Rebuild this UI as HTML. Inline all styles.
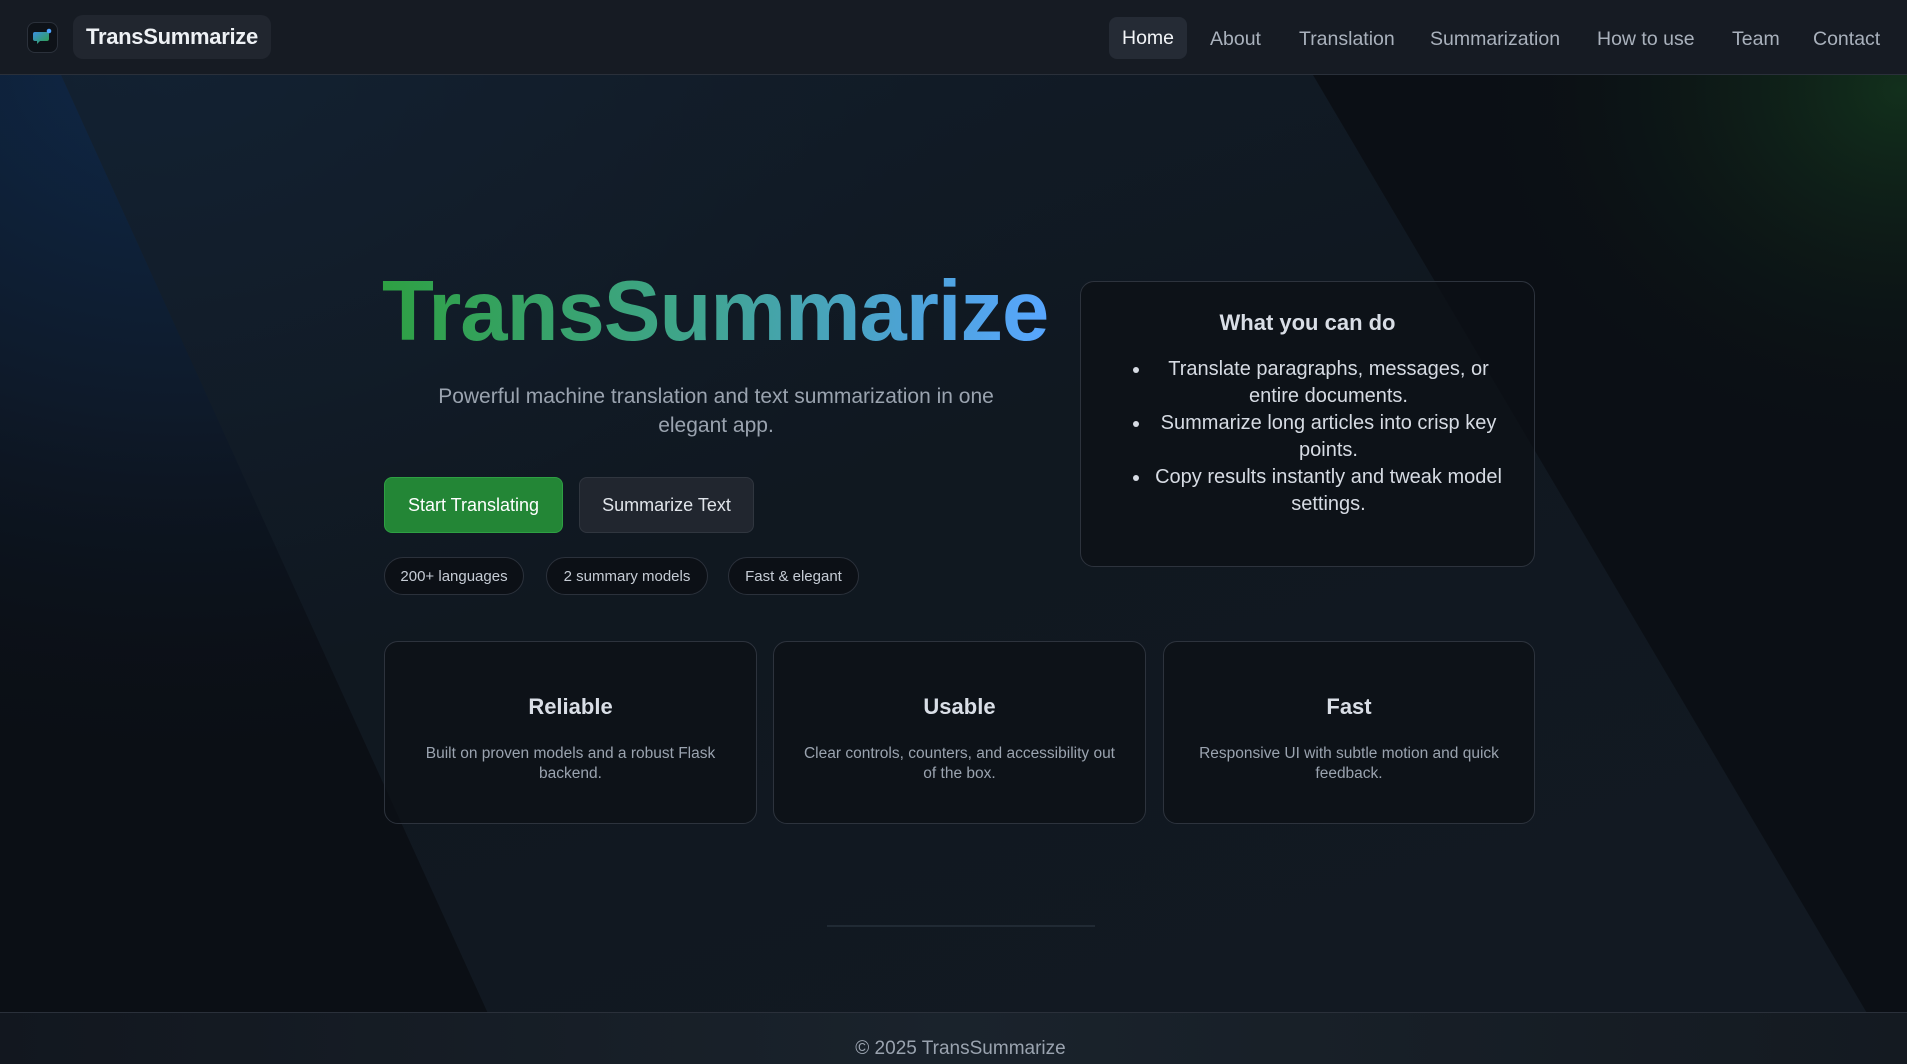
<!DOCTYPE html>
<html><head><meta charset="utf-8"><style>
*{box-sizing:border-box;margin:0;padding:0}
html,body{width:1907px;height:1064px;overflow:hidden}
body{font-family:"Liberation Sans",sans-serif;background:#0c1117;color:#d6dbe3;position:relative}
.bg{position:absolute;left:0;top:0;width:1907px;height:1064px}
header{position:absolute;left:0;top:0;width:1907px;height:75px;background:#161b23;border-bottom:1px solid #2a303a}
.logo{position:absolute;left:27px;top:22px;width:31px;height:31px;border:1px solid #2b313b;border-radius:8px;background:#0e1218}
.brand{position:absolute;left:73px;top:15px;width:198px;height:44px;border-radius:10px;background:#21262f;font-weight:bold;font-size:22px;color:#eef1f5;line-height:44px;text-align:center;letter-spacing:-0.3px}
nav a{position:absolute;top:19px;height:41px;line-height:41px;font-size:19.5px;color:#a9b1bc;text-decoration:none}
nav a.on{background:#252b35;color:#f2f4f7;border-radius:8px;padding:0 13px;top:17px;height:42px;line-height:42px}
h1{position:absolute;left:382px;top:262px;font-size:85px;font-weight:bold;letter-spacing:-1px;background:linear-gradient(90deg,#2ea043,#3fa58a 45%,#4da3d8 80%,#58a6ff);-webkit-background-clip:text;background-clip:text;color:transparent;line-height:100px}
.sub{position:absolute;left:406px;top:382px;width:620px;text-align:center;font-size:21px;line-height:29px;color:#9aa3af}
.btn{position:absolute;top:477px;height:56px;border-radius:8px;font-size:18px;line-height:54px;text-align:center}
.chip{position:absolute;top:557px;height:38px;border:1px solid #2b313b;border-radius:19px;background:#0c1016;font-size:15px;line-height:38px;text-align:center;color:#c6ccd5}
.card{position:absolute;border:1px solid #2d333d;border-radius:14px;background:rgba(12,16,22,.75)}
.card h3{font-size:22px;text-align:center;color:#d9dee6}
.fc h3{margin-top:52px}
.fc p{margin:24px 28px 0;font-size:15.5px;line-height:20px;text-align:center;color:#9aa3af}
ul{margin:20px 28px 0 70px;font-size:20px;line-height:27px;text-align:center;color:#d6dbe3}
footer{position:absolute;left:0;top:1012px;width:1907px;height:52px;border-top:1px solid #2a303a;background:linear-gradient(90deg,#12171f,#1a232c 50%,#141a21);text-align:center;font-size:19px;line-height:72px;color:#9aa3af;overflow:hidden;padding-left:14px}
</style></head><body>
<svg class="bg" viewBox="0 0 1907 1064">
<defs>
<radialGradient id="bl" cx="0" cy="0" r="1" gradientUnits="userSpaceOnUse" gradientTransform="translate(180,60) scale(900,700)"><stop offset="0" stop-color="#0f2848"/><stop offset="0.5" stop-color="#0e1a2a"/><stop offset="1" stop-color="#0c1119" stop-opacity="0"/></radialGradient>
<radialGradient id="gr" cx="0" cy="0" r="1" gradientUnits="userSpaceOnUse" gradientTransform="translate(1900,90) scale(450,380)"><stop offset="0" stop-color="#12301c"/><stop offset="1" stop-color="#0b0e13" stop-opacity="0"/></radialGradient>
<linearGradient id="mid" x1="0" y1="0" x2="0.6" y2="1"><stop offset="0" stop-color="#13202e"/><stop offset="0.5" stop-color="#111922"/><stop offset="1" stop-color="#131b24"/></linearGradient>
</defs>
<rect width="1907" height="1064" fill="#0b0f15"/>
<rect width="1907" height="1064" fill="url(#bl)"/>
<rect width="1907" height="1064" fill="url(#gr)"/>
<polygon points="61,75 1313,75 1897,1064 511,1064" fill="url(#mid)" opacity="0.85"/>
<line x1="827" y1="926" x2="1095" y2="926" stroke="#26303a" stroke-width="1.5"/>
</svg>
<header>
<div class="logo"><svg width="29" height="29" viewBox="0 0 29 29"><defs><linearGradient id="lg" x1="0" y1="0" x2="1" y2="1"><stop offset="0" stop-color="#3b8fe0"/><stop offset="1" stop-color="#2ea043"/></linearGradient></defs><path d="M7 9h12a2 2 0 0 1 2 2v5a2 2 0 0 1-2 2h-7l-3 3v-3H7a2 2 0 0 1-2-2v-5a2 2 0 0 1 2-2z" fill="url(#lg)"/><circle cx="21" cy="8" r="2.3" fill="#4da3ff"/></svg></div>
<div class="brand">TransSummarize</div>
<nav>
<a class="on" style="left:1109px">Home</a>
<a style="left:1210px">About</a>
<a style="left:1299px">Translation</a>
<a style="left:1430px">Summarization</a>
<a style="left:1597px">How to use</a>
<a style="left:1732px">Team</a>
<a style="left:1813px">Contact</a>
</nav>
</header>
<h1>TransSummarize</h1>
<div class="sub">Powerful machine translation and text summarization in one elegant app.</div>
<div class="btn" style="left:384px;width:179px;background:#238636;border:1px solid #2ea043;color:#fff">Start Translating</div>
<div class="btn" style="left:579px;width:175px;background:#21262f;border:1px solid #30363f;color:#e0e4ea">Summarize Text</div>
<div class="chip" style="left:384px;width:140px">200+ languages</div>
<div class="chip" style="left:546px;width:162px">2 summary models</div>
<div class="chip" style="left:728px;width:131px">Fast &amp; elegant</div>
<div class="card" style="left:1080px;top:281px;width:455px;height:286px">
<h3 style="margin-top:28px">What you can do</h3>
<ul><li>Translate paragraphs, messages, or entire documents.</li><li>Summarize long articles into crisp key points.</li><li>Copy results instantly and tweak model settings.</li></ul>
</div>
<div class="card fc" style="left:384px;top:641px;width:373px;height:183px"><h3>Reliable</h3><p>Built on proven models and a robust Flask backend.</p></div>
<div class="card fc" style="left:773px;top:641px;width:373px;height:183px"><h3>Usable</h3><p>Clear controls, counters, and accessibility out of the box.</p></div>
<div class="card fc" style="left:1163px;top:641px;width:372px;height:183px"><h3>Fast</h3><p>Responsive UI with subtle motion and quick feedback.</p></div>
<footer>© 2025 TransSummarize</footer>
</body></html>
